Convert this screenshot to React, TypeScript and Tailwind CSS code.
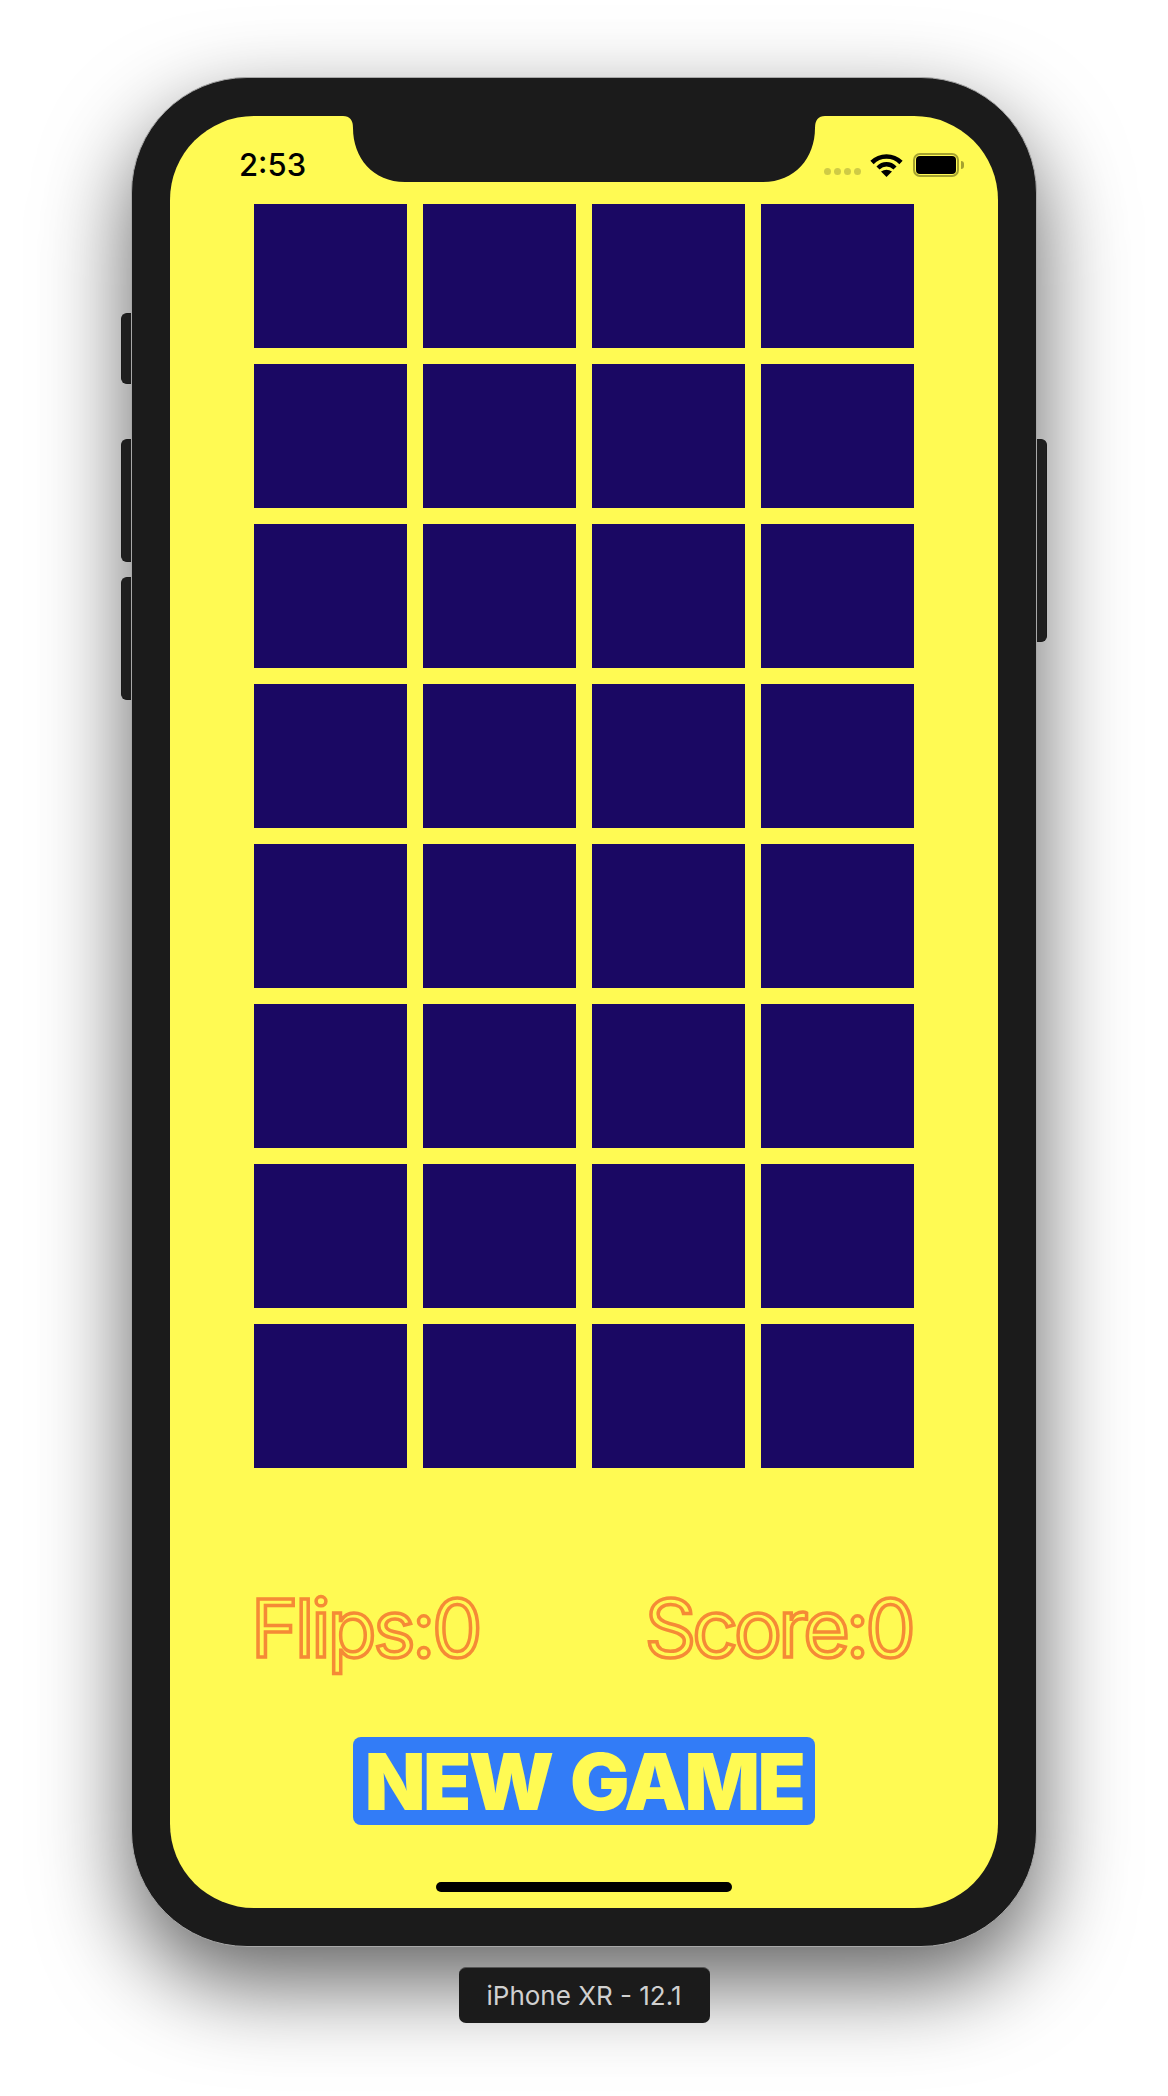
export default function App() {
  const cards = Array.from({ length: 32 }, (_, i) => i);
  return (
    <div className="relative flex h-[2096px] w-[1168px] flex-col items-center overflow-hidden bg-white pt-[77px] font-['Inter',sans-serif]">
      <div className="relative h-[1870px] w-[906px] shrink-0">
        <div className="absolute left-[-10px] top-[236px] h-[71px] w-[14px] rounded-l-[6px] border border-r-0 border-[#242424] bg-[#2c2c2c]" />
        <div className="absolute left-[-10px] top-[362px] h-[123px] w-[14px] rounded-l-[6px] border border-r-0 border-[#242424] bg-[#2c2c2c]" />
        <div className="absolute left-[-10px] top-[500px] h-[123px] w-[14px] rounded-l-[6px] border border-r-0 border-[#242424] bg-[#2c2c2c]" />
        <div className="absolute right-[-10px] top-[362px] h-[203px] w-[14px] rounded-r-[6px] border border-l-0 border-[#242424] bg-[#2c2c2c]" />
        <div className="relative h-full w-full rounded-[116px] border border-[#a8a8a8] bg-[#1b1b1b] p-[38px] shadow-[0_36px_90px_rgba(0,0,0,0.62)]">
          <div className="relative flex h-full w-full flex-col overflow-hidden rounded-[84px] bg-[#fffa53]">
            <svg className="absolute left-[173px] top-0" width="482" height="66" viewBox="0 0 482 66">
              <path d="M0 0 Q10 0 10 12 C10 42 30 66 62 66 H420 C452 66 472 42 472 12 Q472 0 482 0 Z" fill="#1b1b1b" />
            </svg>
            <div className="flex h-[88px] shrink-0 items-start justify-between pl-[69px] pr-[34px] pt-[37px]">
              <span className="mt-[-6px] text-[31px] font-medium leading-[36px] text-black">2:53</span>
              <div className="flex items-center">
                <div className="mt-[12px] flex gap-[3px]">
                  <span className="h-[7px] w-[7px] rounded-full bg-[#cfcb45]" />
                  <span className="h-[7px] w-[7px] rounded-full bg-[#cfcb45]" />
                  <span className="h-[7px] w-[7px] rounded-full bg-[#cfcb45]" />
                  <span className="h-[7px] w-[7px] rounded-full bg-[#cfcb45]" />
                </div>
                <svg className="ml-[9px]" width="33" height="24" viewBox="0 0 33 24">
                  <path d="M2 9.5 C10 1.5 23 1.5 31 9.5" fill="none" stroke="#000" strokeWidth="4.6" />
                  <path d="M8 15 C13 10 20 10 25 15" fill="none" stroke="#000" strokeWidth="4.4" />
                  <path d="M16.5 24 L11 18.6 Q16.5 15 22 18.6 Z" fill="#000" />
                </svg>
                <div className="ml-[10px] h-[24px] w-[46px] rounded-[7px] border-[2.5px] border-[#a5a22f] p-[1px]">
                  <div className="h-full w-full rounded-[4px] bg-black" />
                </div>
                <span className="ml-[2px] h-[8px] w-[3px] rounded-r-[3px] bg-[#a5a22f]" />
              </div>
            </div>
            <div className="grid grid-cols-4 gap-4 px-[84px]">
              {cards.map((c) => (
                <div key={c} className="h-[144px] bg-[#1a0863]" />
              ))}
            </div>
            <div className="mt-[111px] flex items-center justify-between pl-[81px] pr-[86px] text-[80px] font-normal leading-[97px] text-transparent [-webkit-text-stroke:3.5px_#f58a36]">
              <span className="tracking-[-3.2px]">Flips:0</span>
              <span className="tracking-[-3.8px]">Score:0</span>
            </div>
            <div className="mt-[61px] flex justify-center">
              <div className="flex h-[88px] w-[462px] items-center justify-center rounded-[8px] bg-[#327cf7] text-[79px] font-black leading-none tracking-[-2.5px] [word-spacing:5px] text-[#fffa53]">
                NEW GAME
              </div>
            </div>
            <div className="mt-[57px] flex justify-center">
              <div className="h-[10px] w-[296px] rounded-full bg-black" />
            </div>
          </div>
        </div>
      </div>
      <div className="relative mt-[20px] flex h-[56px] w-[251px] items-center justify-center rounded-[7px] border-t border-[#555] bg-[#1b1b1b] text-[26px] leading-none text-[#d0d0d0]">
        iPhone XR - 12.1
      </div>
    </div>
  );
}
